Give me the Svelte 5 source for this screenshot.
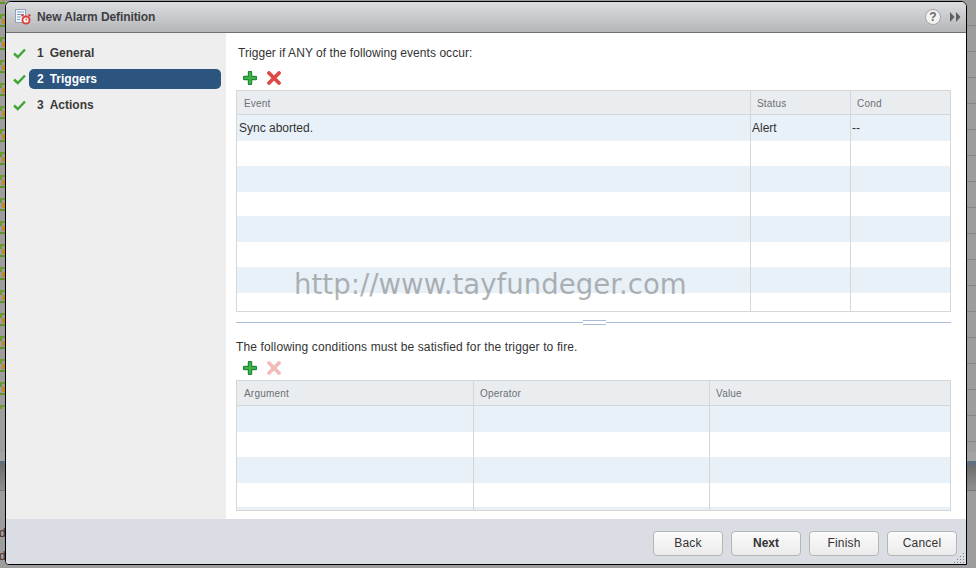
<script>
  const steps = [
    { n: 1, label: 'General' },
    { n: 2, label: 'Triggers', active: true },
    { n: 3, label: 'Actions' }
  ];
  const eventRows = [
    ['Sync aborted.', 'Alert', '--'],
    ['', '', ''], ['', '', ''], ['', '', ''], ['', '', ''], ['', '', ''], ['', '', ''], ['', '', '']
  ];
  const conditionRows = [0, 1, 2, 3, 4];
  // triangle of dots for the resize handle
  const gripDots = [[9, 1], [6, 4], [9, 4], [3, 7], [6, 7], [9, 7], [0, 10], [3, 10], [6, 10], [9, 10]];
</script>

<div class="page">
  <svg class="tiles" width="5" height="409" aria-hidden="true">
    <defs>
      <pattern id="tile" width="5" height="23" patternUnits="userSpaceOnUse" patternTransform="translate(0 14)">
        <path d="M1 5V1h4" stroke="#6f9a2e" stroke-width="2" fill="none" />
        <rect x="2" y="5" width="3" height="5" fill="#c08a20" />
        <rect y="11" width="5" height="2" fill="#5f9428" />
      </pattern>
    </defs>
    <rect width="5" height="409" fill="url(#tile)" />
  </svg>
  <div class="band"></div>
  <div class="strip-lines"></div>
  <span class="behind one">d</span>
  <span class="behind two">d</span>

  <div class="dialog">
    <header class="title">
      <svg class="alarm" width="16" height="16" viewBox="0 0 16 16" aria-hidden="true">
        <rect x="0.500" y="0.500" width="10" height="13" fill="#f4f7fb" stroke="#8fa3bb" />
        <path d="M2 3h7M2 5.500h7M2 8h4M2 10.500h3" stroke="#7f9fc4" />
        <circle cx="11" cy="11" r="4.500" fill="#d8403a" />
        <path d="M6.500 7l2-1.500M15.500 7l-2-1.500" stroke="#d8403a" stroke-width="2" />
        <circle cx="11" cy="11" r="2.600" fill="#fff" />
        <path d="M11 9.500V11h1.300" stroke="#c8352d" fill="none" />
      </svg>
      <span class="title-text">New Alarm Definition</span>
      <span class="help">?</span>
      <svg width="12" height="10" viewBox="0 0 12 10" aria-hidden="true">
        <path d="M1 0l4.500 5L1 10zM7 0l4.500 5L7 10z" fill="#5c5f63" />
      </svg>
    </header>

    <div class="main">
      <nav class="steps">
        {#each steps as s}
          <div class="step">
            <svg class="check" width="13" height="11" viewBox="0 0 13 11" aria-hidden="true">
              <path d="M1 5.500l3.800 3.500L12 1.500" fill="none" stroke="#3fa535" stroke-width="2.400" />
            </svg>
            <div class="step-label" class:active={s.active}>
              <span class="num">{s.n}</span><span>{s.label}</span>
            </div>
          </div>
        {/each}
      </nav>

      <section class="content">
        <p class="lead first">Trigger if ANY of the following events occur:</p>
        <div class="tools top">
          <svg width="14" height="14" viewBox="0 0 14 14" aria-hidden="true">
            <path d="M7 1.500v11M1.500 7h11" stroke="#1f8a33" stroke-width="4.400" stroke-linecap="round" />
            <path d="M7 2v10M2 7h10" stroke="#3fb24a" stroke-width="2.200" stroke-linecap="round" />
          </svg>
          <svg width="14" height="14" viewBox="0 0 14 14" aria-hidden="true">
            <path d="M2 2l10 10M12 2L2 12" stroke="#dd4a44" stroke-width="3.800" stroke-linecap="round" />
          </svg>
        </div>
        <div class="grid events">
          <div class="row head"><div>Event</div><div>Status</div><div>Cond</div></div>
          {#each eventRows as r, i}
            <div class="row" class:odd={i % 2 === 0}>
              <div class="cell">{r[0]}</div><div class="cell">{r[1]}</div><div class="cell">{r[2]}</div>
            </div>
          {/each}
        </div>

        <div class="splitter"><span class="grip"></span></div>

        <p class="lead second">The following conditions must be satisfied for the trigger to fire.</p>
        <div class="tools">
          <svg width="14" height="14" viewBox="0 0 14 14" aria-hidden="true">
            <path d="M7 1.500v11M1.500 7h11" stroke="#1f8a33" stroke-width="4.400" stroke-linecap="round" />
            <path d="M7 2v10M2 7h10" stroke="#3fb24a" stroke-width="2.200" stroke-linecap="round" />
          </svg>
          <svg width="14" height="14" viewBox="0 0 14 14" aria-hidden="true">
            <path d="M2 2l10 10M12 2L2 12" stroke="#f2bcbb" stroke-width="3.800" stroke-linecap="round" />
          </svg>
        </div>
        <div class="grid conditions">
          <div class="row head"><div>Argument</div><div>Operator</div><div>Value</div></div>
          {#each conditionRows as i}
            <div class="row" class:odd={i % 2 === 0}><div class="cell"></div><div class="cell"></div><div class="cell"></div></div>
          {/each}
        </div>
      </section>
    </div>

    <footer class="actions">
      <button>Back</button>
      <button class="primary">Next</button>
      <button>Finish</button>
      <button>Cancel</button>
      <svg class="resize" width="11" height="11" aria-hidden="true">
        {#each gripDots as d}
          <rect x={d[0]} y={d[1]} width="1" height="1" fill="#7d8087" />
        {/each}
      </svg>
    </footer>

    <div class="watermark">http://www.tayfundeger.com</div>
  </div>
</div>

<style>
  :global(body) {
    margin: 0;
    font-family: "Liberation Sans", Arial, sans-serif;
  }
  .page {
    position: relative;
    width: 976px;
    height: 568px;
    padding: 1px 9px 3px 5px;
    box-sizing: border-box;
    background: #9d9d9d;
    overflow: hidden;
  }
  .tiles {
    position: absolute;
    left: 0;
    top: 0;
  }
  .band {
    position: absolute;
    left: 0;
    right: 0;
    top: 452px;
    height: 38px;
    background: linear-gradient(#a3a3a3 0 9px, #5f7180 9px 13px, #6d6d6d 13px, #8f8f8f 100%);
    border-bottom: 1px solid #777;
  }
  .strip-lines {
    position: absolute;
    right: 0;
    top: 0;
    width: 9px;
    height: 452px;
    background: repeating-linear-gradient(#9d9d9d 0 25px, #858585 25px 26px);
  }
  .behind {
    position: absolute;
    left: -1px;
    font-size: 12px;
    color: #4a2a1a;
  }
  .behind.one {
    top: 526px;
  }
  .behind.two {
    top: 549px;
  }
  .dialog {
    position: relative;
    height: 100%;
    box-sizing: border-box;
    display: flex;
    flex-direction: column;
    border: 1px solid #000;
    border-radius: 6px 6px 0 4px;
    overflow: hidden;
    background: #fff;
  }
  .title {
    height: 31px;
    flex: none;
    box-sizing: border-box;
    display: flex;
    align-items: center;
    padding: 0 5px 0 9px;
    background: linear-gradient(#dcdde0, #b5b6b8);
    border-bottom: 1px solid #6f7072;
  }
  .title-text {
    flex: 1;
    margin-left: 6px;
    font-size: 12px;
    font-weight: bold;
    letter-spacing: -0.1px;
    color: #3d3f44;
  }
  .help {
    width: 16px;
    height: 16px;
    box-sizing: border-box;
    border-radius: 50%;
    margin-right: 8px;
    background: #f2f2f2;
    border: 1px solid #a5a5a5;
    font-size: 12px;
    line-height: 14px;
    font-weight: bold;
    text-align: center;
    color: #6a6a6a;
  }
  .main {
    flex: 1;
    display: flex;
    min-height: 0;
  }
  .steps {
    width: 220px;
    flex: none;
    background: #eeeeee;
    padding-top: 7px;
    box-sizing: border-box;
  }
  .step {
    height: 26px;
    display: flex;
    align-items: center;
    padding-left: 7px;
  }
  .check {
    flex: none;
    margin-right: 3px;
  }
  .step-label {
    flex: none;
    width: 192px;
    height: 20px;
    box-sizing: border-box;
    border-radius: 5px;
    padding-left: 8px;
    font-size: 12px;
    font-weight: bold;
    line-height: 20px;
    color: #3a3a3a;
  }
  .step-label.active {
    background: #2b547e;
    color: #fff;
  }
  .num {
    margin-right: 6px;
  }
  .content {
    flex: 1;
    min-width: 0;
    padding: 12px 15px 0 10px;
    position: relative;
  }
  .lead {
    margin: 0;
    font-size: 12px;
    line-height: 16px;
    color: #333;
  }
  .lead.first {
    padding-left: 2px;
    letter-spacing: 0.05px;
  }
  .lead.second {
    letter-spacing: 0.13px;
  }
  .tools {
    display: flex;
    gap: 10px;
    padding: 6px 0 5px 7px;
    height: 14px;
  }
  .tools.top {
    padding: 10px 0 5px 7px;
  }
  .grid {
    border: 1px solid #d4d6d8;
    overflow: hidden;
    box-sizing: border-box;
  }
  .events {
    height: 222px;
  }
  .conditions {
    height: 131px;
  }
  .row {
    display: grid;
    height: 24.670px;
    font-size: 12px;
    color: #333;
  }
  .events .row {
    grid-template-columns: 514px 100px 1fr;
  }
  .conditions .row {
    grid-template-columns: 237px 236px 1fr;
  }
  .row.odd {
    background: #e8f0f8;
    height: 26px;
  }
  .row > div {
    border-right: 1px solid #d4d6d8;
    padding-left: 1px;
    line-height: 26px;
    min-width: 0;
  }
  .row > div:first-child {
    padding-left: 2px;
  }
  .row > div:last-child {
    border-right: 0;
  }
  .row.head {
    height: 24px;
    box-sizing: border-box;
    background: #e9edf0;
    border-bottom: 1px solid #d4d6d8;
    font-size: 10px;
    color: #6c6f73;
  }
  .conditions .row.head {
    height: 25px;
  }
  .row.head > div {
    padding-left: 6px;
    line-height: 25px;
    letter-spacing: 0.2px;
  }
  .row.head > div:first-child {
    padding-left: 7px;
  }
  .splitter {
    position: relative;
    height: 1px;
    margin-top: 10px;
    margin-bottom: 16px;
    background: #a9bcd8;
  }
  .grip {
    position: absolute;
    left: 347px;
    top: -2px;
    width: 23px;
    height: 3px;
    border-top: 1px solid #a9bcd8;
    border-bottom: 1px solid #a9bcd8;
    background: #fff;
  }
  .actions {
    position: relative;
    height: 45px;
    flex: none;
    box-sizing: border-box;
    display: flex;
    justify-content: flex-end;
    align-items: center;
    gap: 8px;
    padding: 3px 9px 0 0;
    background: #dadde4;
  }
  .resize {
    position: absolute;
    right: 1px;
    bottom: 1px;
  }
  button {
    width: 70px;
    height: 25px;
    border: 1px solid #b6b6b6;
    border-radius: 4px;
    background: linear-gradient(#fbfbfb, #ebebeb);
    font: 12px "Liberation Sans", Arial, sans-serif;
    letter-spacing: 0.2px;
    color: #333;
    padding: 0;
  }
  button.primary {
    font-weight: bold;
    letter-spacing: 0;
  }
  .watermark {
    position: absolute;
    left: 288px;
    top: 266px;
    width: 392px;
    overflow: hidden;
    white-space: nowrap;
    font-family: "DejaVu Sans", sans-serif;
    font-size: 27.600px;
    color: rgba(130, 130, 130, 0.6);
  }
</style>
